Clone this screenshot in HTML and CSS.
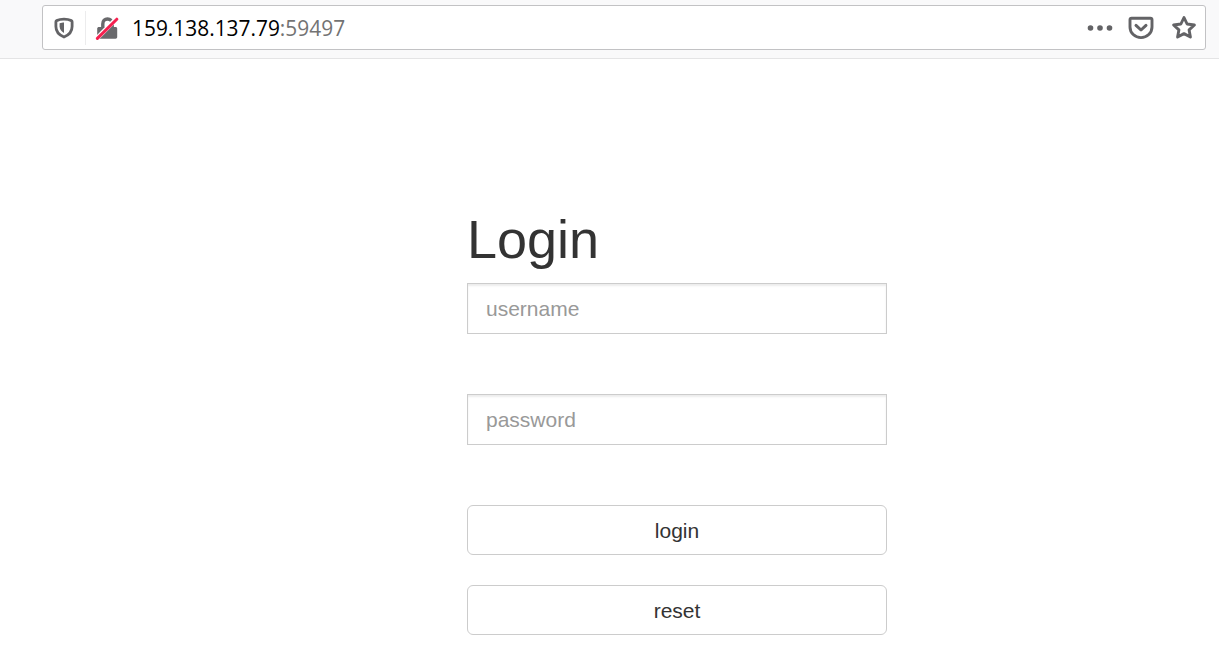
FILE: index.html
```html
<!DOCTYPE html>
<html lang="en">
<head>
  <meta charset="UTF-8" />
  <title>Login</title>
  <link rel="stylesheet" href="styles.css">
</head>
<body>
  <div class="toolbar">
    <div class="urlbar">
      <svg class="icon shield" width="20" height="22" viewBox="0 0 20 22">
        <path d="M10 2.2 C7.5 2.2 4.6 2.7 2.6 3.6 C2.1 3.8 1.9 4.2 1.9 4.7 L1.9 9.5 C1.9 14.5 5.5 18.2 10 20 C14.5 18.2 18.1 14.5 18.1 9.5 L18.1 4.7 C18.1 4.2 17.9 3.8 17.4 3.6 C15.4 2.7 12.5 2.2 10 2.2 Z" fill="none" stroke="#636366" stroke-width="2.8" stroke-linejoin="round"/>
        <path d="M10 5.5 C8.8 5.5 7 5.8 5.6 6.3 L5.6 9.5 C5.6 12.2 7.6 14.6 10 15.9 Z" fill="#636366"/>
      </svg>
      <span class="divider"></span>
      <svg class="icon lock" width="24" height="24" viewBox="0 0 24 24">
        <path d="M7.8 11.5 L7.8 8 C7.8 4.8 9.8 3 12.5 3 C15.2 3 17.2 4.8 17.2 8 L17.2 11.5" fill="none" stroke="#69696c" stroke-width="3.4"/>
        <path d="M4 11 L20.5 11 C21.5 11 22.2 11.7 22.2 12.7 L22.2 21 C22.2 22 21.5 22.7 20.5 22.7 L4 22.7 C3 22.7 2.2 22 2.2 21 L2.2 12.7 C2.2 11.7 3 11 4 11 Z" fill="#69696c"/>
        <path d="M1 23.2 L22 2.2" stroke="#fff" stroke-width="4.6"/>
        <path d="M2.4 22.4 L21.8 3.2" stroke="#f5204f" stroke-width="3" stroke-linecap="round"/>
      </svg>
      <div class="address">159.138.137.79<span class="port">:59497</span></div>
      <div class="actions">
        <svg class="icon dots" width="26" height="6" viewBox="0 0 26 6">
          <circle cx="3.5" cy="3" r="2.8" fill="#636366"/>
          <circle cx="13" cy="3" r="2.8" fill="#636366"/>
          <circle cx="22.5" cy="3" r="2.8" fill="#636366"/>
        </svg>
        <svg class="icon" width="26" height="24" viewBox="0 0 26 24">
          <path d="M3.6 2.2 L22.4 2.2 C23.3 2.2 24 2.9 24 3.8 L24 11 C24 17 19 21.6 13 21.6 C7 21.6 2 17 2 11 L2 3.8 C2 2.9 2.7 2.2 3.6 2.2 Z" fill="none" stroke="#636366" stroke-width="2.9" stroke-linejoin="round"/>
          <path d="M8 9.4 L13 14 L18 9.4" fill="none" stroke="#636366" stroke-width="3" stroke-linecap="round" stroke-linejoin="round"/>
        </svg>
        <svg class="icon" width="26" height="25" viewBox="0 0 26 25">
          <path d="M13 2.5 L16.1 9 L23.4 10 L18.1 14.9 L19.4 22 L13 18.6 L6.6 22 L7.9 14.9 L2.6 10 L9.9 9 Z" fill="none" stroke="#636366" stroke-width="2.9" stroke-linejoin="round"/>
        </svg>
      </div>
    </div>
  </div>

  <div class="container">
    <h1>Login</h1>
    <form id="loginForm">
      <input class="field" type="text" name="username" placeholder="username" />
      <input class="field" type="password" name="password" placeholder="password" />
      <button class="btn login-btn" type="submit">login</button>
      <button class="btn" type="reset">reset</button>
    </form>
  </div>
</body>
</html>
```

FILE: styles.css
```css
body {
  margin: 0;
  background: #fff;
  font-family: "Liberation Sans", Arial, sans-serif;
  color: #333;
  overflow: hidden;
}
.toolbar {
  height: 53px;
  padding: 5px 13px 0 42px;
  background: #f9f9fa;
  border-bottom: 1px solid #e4e4e5;
}
.urlbar {
  height: 45px;
  box-sizing: border-box;
  display: flex;
  align-items: center;
  background: #fff;
  border: 1px solid #c2c2c4;
  border-radius: 3px;
  padding: 0 8px 0 11px;
}
.icon {
  display: block;
  flex: none;
}
.divider {
  width: 1px;
  height: 34px;
  background: #ececed;
  margin: 0 9px 0 11px;
}
.address {
  margin-left: 13px;
  font-family: "Open Sans", sans-serif;
  font-size: 20.9px;
  color: #000;
  white-space: nowrap;
}
.port {
  color: #737373;
}
.actions {
  margin-left: auto;
  display: flex;
  align-items: center;
  gap: 17px;
}
.dots {
  margin-right: -2px;
}
.container {
  width: 420px;
  margin-left: 467px;
  padding-top: 148px;
}
h1 {
  margin: 0 0 12px;
  font-size: 54px;
  font-weight: 400;
  line-height: 64px;
}
.field {
  display: block;
  width: 100%;
  height: 51px;
  box-sizing: border-box;
  margin-bottom: 60px;
  padding: 0 18px;
  border: 1px solid #ccc;
  border-radius: 0;
  outline: none;
  font-family: inherit;
  font-size: 21px;
  color: #333;
  box-shadow: inset 0 2px 2px rgba(0,0,0,.075);
}
.field::placeholder {
  color: #999;
  opacity: 1;
}
.btn {
  display: block;
  width: 100%;
  height: 50px;
  padding: 2px 0 0;
  background: #fff;
  border: 1px solid #ccc;
  border-radius: 6px;
  font-family: inherit;
  font-size: 21px;
  color: #333;
  cursor: pointer;
}
.login-btn {
  margin-bottom: 30px;
}
```
